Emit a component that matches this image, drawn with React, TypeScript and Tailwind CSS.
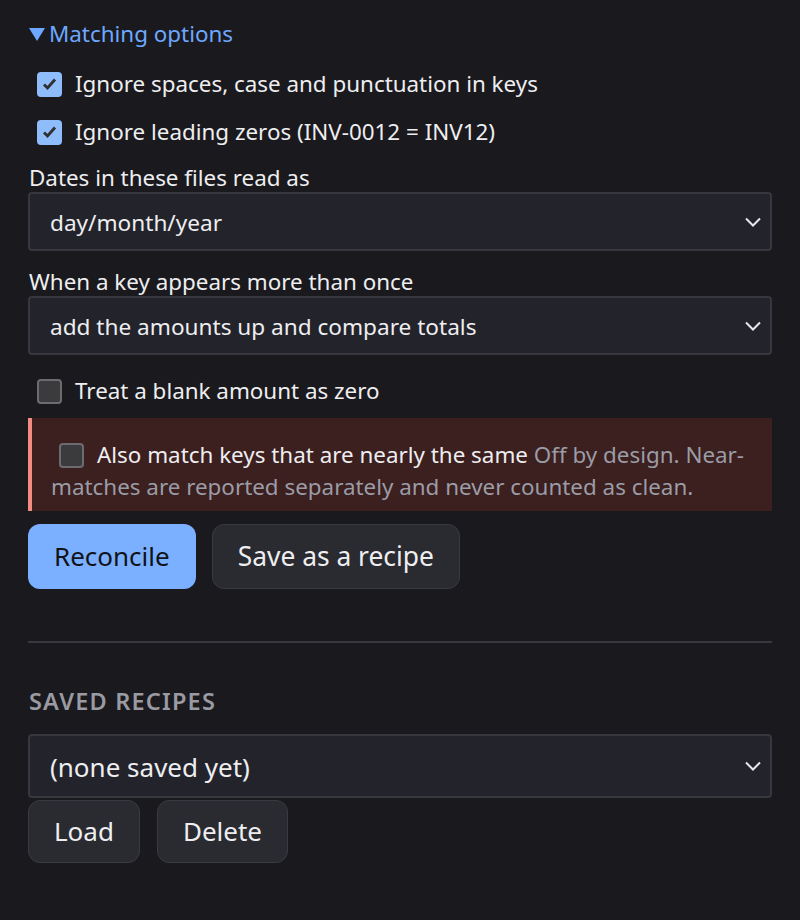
import React from "react";

const Chevron = () => (
  <svg width="18" height="12" viewBox="0 0 18 12" className="shrink-0">
    <path d="M2 2.5 L9 9.5 L16 2.5" fill="none" stroke="#e8e8ea" strokeWidth="2" />
  </svg>
);

const Check = ({ checked }: { checked: boolean }) =>
  checked ? (
    <span className="ml-[9px] mr-[13px] flex h-[25px] w-[25px] shrink-0 items-center justify-center rounded-[4px] bg-[#8fbcfb]">
      <svg width="17" height="14" viewBox="0 0 17 14">
        <path d="M3 7.5 L6.5 11 L14 2.5" fill="none" stroke="#2e2e33" strokeWidth="2.8" />
      </svg>
    </span>
  ) : (
    <span className="ml-[9px] mr-[13px] h-[25px] w-[25px] shrink-0 rounded-[4px] border-2 border-[#6c6c70] bg-[#3b3b3d]" />
  );

const Select = ({ text, big }: { text: string; big?: boolean }) => (
  <div
    className={`flex items-center justify-between rounded-[4px] border-2 border-[#37373d] bg-[#23232b] pl-[20px] pr-[8px] text-[#eeeef0] ${
      big ? "h-[64px] text-[26px]" : "h-[59px] text-[22.6px]"
    }`}
  >
    <span className="pt-[3px]">{text}</span>
    <Chevron />
  </div>
);

export default function App() {
  return (
    <div
      className="min-h-[920px] bg-[#19191e] px-[28px] pt-[19px] text-[22.4px] text-[#eeeef0]"
      style={{ fontFamily: '"Noto Sans", "Open Sans", sans-serif' }}
    >
      <div className="flex h-[30px] items-center pl-[1px] text-[#6ea8fe]">
        <svg width="16" height="14" viewBox="0 0 16 14" className="mr-[4px] shrink-0">
          <path d="M0 1 L16 1 L8 14 Z" fill="#6ea8fe" />
        </svg>
        <span>Matching options</span>
      </div>

      <div className="mt-[17px] flex h-[36px] items-center">
        <Check checked />
        <span>Ignore spaces, case and punctuation in keys</span>
      </div>
      <div className="mt-[12px] flex h-[36px] items-center">
        <Check checked />
        <span>Ignore leading zeros (INV-0012 = INV12)</span>
      </div>

      <div className="mt-[14px] flex h-[28px] items-center pl-[1px]">Dates in these files read as</div>
      <Select text="day/month/year" />

      <div className="mt-[17px] flex h-[28px] items-center pl-[1px]">When a key appears more than once</div>
      <Select text="add the amounts up and compare totals" />

      <div className="mt-[18px] flex h-[36px] items-center">
        <Check checked={false} />
        <span>Treat a blank amount as zero</span>
      </div>

      <div className="mt-[9px] h-[93px] border-l-4 border-[#f28b82] bg-[#3c1f1f] pl-[19px] pr-[16px] pt-[20px] leading-[32px]">
        <span className="relative top-[5px] mr-[13px] ml-[8px] inline-block h-[25px] w-[25px] rounded-[4px] border-2 border-[#6c6c70] bg-[#3b3b3d] align-baseline" />
        <span>Also match keys that are nearly the same </span>
        <span className="text-[#9a9ca6]">
          Off by design. Near-matches are reported separately and never counted as clean.
        </span>
      </div>

      <div className="mt-[13px] flex gap-[16px]">
        <button className="h-[65px] rounded-[12px] bg-[#7ab0ff] px-[26px] text-[26px] text-[#111318]">Reconcile</button>
        <button className="h-[65px] rounded-[12px] border border-[#3a3a42] bg-[#2a2a31] px-[25px] text-[26.4px] text-[#eeeef0]">
          Save as a recipe
        </button>
      </div>

      <div className="mt-[52px] h-[2px] bg-[#38383e]" />

      <div className="mt-[44px] flex h-[30px] items-center pl-[1px] text-[23.5px] font-semibold tracking-[1.2px] text-[#9a9aa2]">
        SAVED RECIPES
      </div>
      <div className="mt-[17px]">
        <Select text="(none saved yet)" big />
      </div>
      <div className="mt-[2px] flex gap-[17px]">
        <button className="h-[63px] rounded-[12px] border border-[#3a3a42] bg-[#2a2a31] px-[25px] text-[26px] text-[#eeeef0]">Load</button>
        <button className="h-[63px] rounded-[12px] border border-[#3a3a42] bg-[#2a2a31] px-[25px] text-[26px] text-[#eeeef0]">Delete</button>
      </div>
    </div>
  );
}
